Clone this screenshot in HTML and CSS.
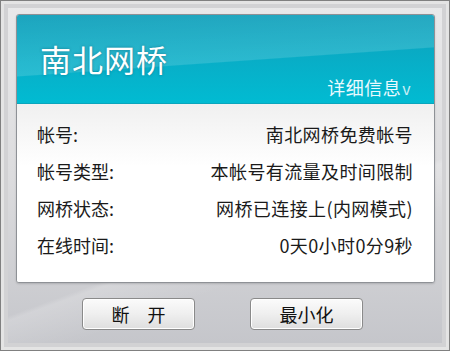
FILE: index.html
```
<!DOCTYPE html>
<html lang="zh-CN">
<head>
    <meta charset="UTF-8">
    <title>南北网桥</title>
    <link rel="stylesheet" href="styles.css">
</head>
<body>
    <div class="window">
        <div class="panel">
            <div class="header">
                <div class="title">南北网桥</div>
                <div class="details">详细信息<span class="arrow">v</span></div>
            </div>
            <div class="info">
                <div class="row"><span>帐号:</span><span>南北网桥免费帐号</span></div>
                <div class="row"><span>帐号类型:</span><span>本帐号有流量及时间限制</span></div>
                <div class="row"><span>网桥状态:</span><span>网桥已连接上(内网模式)</span></div>
                <div class="row"><span>在线时间:</span><span>0天0小时0分9秒</span></div>
            </div>
        </div>
        <div class="actions">
            <button class="btn">断&emsp;开</button>
            <button class="btn">最小化</button>
        </div>
    </div>
</body>
</html>
```
FILE: styles.css
```
body {
    margin: 0;
    font-family: "Noto Sans CJK SC", "Microsoft YaHei", sans-serif;
    background: #fff;
}
.window {
    width: 450px;
    height: 351px;
    box-sizing: border-box;
    border: 1px solid #808080;
    padding: 13px 14px 0 15px;
    background:
        linear-gradient(160deg, rgba(255,255,255,0) 62%, rgba(255,255,255,0.18) 63%, rgba(255,255,255,0) 72%),
        linear-gradient(to bottom, #e9e9ea 0%, #dcdcde 50%, #c4c5ca 100%);
    box-shadow: inset 0 0 0 3px #e4e4e4, inset 0 0 0 7px #d2d2d4;
}
.panel {
    border: 1px solid #8e9196;
    border-radius: 3px;
    background: #fff;
    overflow: hidden;
    box-shadow: 0 1px 2px rgba(0,0,0,0.15);
}
.header {
    height: 89px;
    box-sizing: border-box;
    padding: 24px 23px 0 23px;
    color: #fff;
    background:
        linear-gradient(176deg, rgba(255,255,255,0.06) 0%, rgba(255,255,255,0.14) 52%, rgba(255,255,255,0) 53%),
        linear-gradient(to bottom, #0e9fba 0%, #07b0c9 60%, #01bbd2 100%);
    border-bottom: 1px solid #0aa5bc;
}
.title {
    font-size: 31px;
    line-height: 40px;
    letter-spacing: 1px;
    text-shadow: 0 0 3px rgba(0,60,80,0.45);
}
.details {
    margin-top: -3px;
    text-align: right;
    font-size: 18px;
    line-height: 22px;
    letter-spacing: 0.5px;
    color: #eafaff;
}
.arrow {
    font-size: 16px;
    margin-left: 1px;
    color: #c8eef5;
}
.info {
    height: 178px;
    box-sizing: border-box;
    padding: 12px 21px 0 20px;
    background: linear-gradient(to bottom, #f0f0f0 0%, #ffffff 35%);
}
.row {
    display: flex;
    justify-content: space-between;
    height: 37px;
    line-height: 37px;
    font-size: 18px;
    color: #1a1a1a;
}
.row span:last-child {
    letter-spacing: 0.4px;
}
.actions {
    display: flex;
    justify-content: center;
    gap: 55px;
    margin-top: 15px;
    padding-right: 6px;
}
.btn {
    width: 113px;
    height: 32px;
    border: 1px solid #8a8a8a;
    border-radius: 4px;
    background: linear-gradient(to bottom, #fbfbfb 0%, #efefef 50%, #dedede 100%);
    font-family: inherit;
    font-size: 18px;
    color: #111;
    padding: 0;
    box-shadow: inset 0 0 0 1px #fff;
}
```
